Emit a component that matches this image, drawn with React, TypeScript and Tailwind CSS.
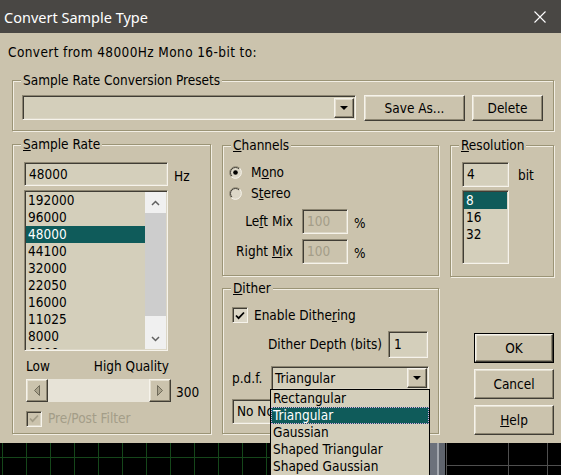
import React from "react";

const FONT = "font-['DejaVu_Sans_Condensed','DejaVu_Sans',sans-serif] [font-stretch:semi-condensed]";
const SUNKEN =
  "border border-t-[#8d8672] border-l-[#8d8672] border-b-[#f6f3eb] border-r-[#f6f3eb] shadow-[inset_1px_1px_0_#403d35,inset_-1px_-1px_0_#dcd7c7]";
const RAISED =
  "border border-t-[#f6f3eb] border-l-[#f6f3eb] border-b-[#403d35] border-r-[#403d35] shadow-[inset_-1px_-1px_0_#8d8672,inset_1px_1px_0_#e4dfd0]";

function Group({
  label,
  className,
  children,
}: {
  label: React.ReactNode;
  className: string;
  children?: React.ReactNode;
}) {
  return (
    <div
      className={`relative shrink-0 border border-[#9b9476] shadow-[1px_1px_0_#f2eee4,inset_1px_1px_0_#f2eee4] ${className}`}
    >
      <span className="absolute -top-[9px] left-[8px] px-[2px] bg-[#cbc3ad] leading-[17px] whitespace-nowrap">
        {label}
      </span>
      {children}
    </div>
  );
}

function Edit({
  className,
  children,
  disabled,
}: {
  className: string;
  children?: React.ReactNode;
  disabled?: boolean;
}) {
  return (
    <div
      className={`shrink-0 flex items-center pl-[4px] whitespace-nowrap overflow-hidden ${SUNKEN} ${
        disabled ? "bg-[#cbc3ad] text-[#a39d88]" : "bg-[#d4cfbb]"
      } ${className}`}
    >
      {children}
    </div>
  );
}

function Button({
  className,
  children,
  def,
}: {
  className: string;
  children: React.ReactNode;
  def?: boolean;
}) {
  if (def) {
    return (
      <div className={`shrink-0 border border-black ${className}`}>
        <div className={`w-full h-full flex items-center justify-center bg-[#cbc3ad] ${RAISED}`}>{children}</div>
      </div>
    );
  }
  return (
    <div className={`shrink-0 flex items-center justify-center bg-[#cbc3ad] ${RAISED} ${className}`}>{children}</div>
  );
}

function Combo({
  className,
  text,
  children,
}: {
  className: string;
  text: string;
  children?: React.ReactNode;
}) {
  return (
    <div className={`relative shrink-0 flex items-center bg-[#d4cfbb] ${SUNKEN} ${className}`}>
      <span className="flex-1 pl-[3px] whitespace-nowrap">{text}</span>
      <div className={`w-[20px] h-[20px] mr-[1px] flex items-center justify-center bg-[#cbc3ad] ${RAISED}`}>
        <svg width="8" height="4" viewBox="0 0 8 4">
          <path d="M0 0H8L4 4Z" fill="#000" />
        </svg>
      </div>
      {children}
    </div>
  );
}

function Check({ disabled }: { disabled?: boolean }) {
  return (
    <div
      className={`shrink-0 w-[16px] h-[16px] flex items-center justify-center ${SUNKEN} ${
        disabled ? "bg-[#cbc3ad]" : "bg-[#dcd7c7]"
      }`}
    >
      <svg width="10" height="9" viewBox="0 0 10 9">
        <path d="M1 4.5L3.6 7.2L9 1.5" fill="none" stroke={disabled ? "#a39d88" : "#000"} strokeWidth="1.8" />
      </svg>
    </div>
  );
}

function Radio({ checked }: { checked?: boolean }) {
  return (
    <svg width="13" height="13" viewBox="0 0 13 13" className="shrink-0">
      <circle cx="6.5" cy="6.5" r="6" fill="#dcd7c7" />
      <path d="M2.26 10.74A6 6 0 0 1 10.74 2.26" fill="none" stroke="#8d8672" />
      <path d="M10.74 2.26A6 6 0 0 1 2.26 10.74" fill="none" stroke="#f6f3eb" />
      <path d="M2.96 10.04A5 5 0 0 1 10.04 2.96" fill="none" stroke="#403d35" />
      {checked && <circle cx="6.5" cy="6.5" r="2.3" fill="#000" />}
    </svg>
  );
}

const RATES = ["192000", "96000", "48000", "44100", "32000", "22050", "16000", "11025", "8000", "6000"];
const PDF = ["Rectangular", "Triangular", "Gaussian", "Shaped Triangular", "Shaped Gaussian"];

function BottomStrip() {
  const greens = Array.from({ length: 12 }, (_, k) => 2.5 + 24 * k);
  return (
    <svg width="561" height="32" viewBox="0 0 561 32" className="block">
      <rect width="561" height="32" fill="#000" />
      {greens.map((x) => (
        <line key={x} x1={x} y1="0" x2={x} y2="32" stroke="#15461a" strokeWidth="1" />
      ))}
      <line x1="0" y1="14.5" x2="270" y2="14.5" stroke="#15461a" strokeWidth="1" />
      <rect x="430" y="0" width="7" height="32" fill="#6c717b" />
      <rect x="437" y="0" width="2" height="32" fill="#a3a7ae" />
      <rect x="439" y="0" width="6" height="32" fill="#5f646d" />
      <line x1="446.5" y1="0" x2="446.5" y2="32" stroke="#555" />
      <line x1="508.5" y1="0" x2="508.5" y2="32" stroke="#4f4f4f" />
      <line x1="547.5" y1="0" x2="547.5" y2="32" stroke="#4f4f4f" />
      <line x1="446" y1="22.5" x2="561" y2="22.5" stroke="#4f4f4f" />
    </svg>
  );
}

export default function App() {
  return (
    <div
      className={`relative w-[561px] h-[475px] overflow-hidden bg-black text-black text-[13.5px] leading-[17px] ${FONT}`}
    >
      {/* Title bar */}
      <div className="h-[33px] bg-[#494744] flex items-center pl-[4px] pr-[15px] text-white font-['Noto_Sans',sans-serif] [font-stretch:normal] text-[14.5px]">
        <span className="leading-[20px]">Convert Sample Type</span>
        <svg className="ml-auto mt-[1px]" width="12" height="12" viewBox="0 0 12 12">
          <path d="M0.5 0.5L11.5 11.5M11.5 0.5L0.5 11.5" stroke="#fff" strokeWidth="1.1" />
        </svg>
      </div>

      {/* Body */}
      <div className="h-[410px] bg-[#cbc3ad] pl-[12px] pt-[11px]">
        <div className="-ml-[4px] whitespace-nowrap tracking-[0.4px]">Convert from 48000Hz Mono 16-bit to:</div>

        <Group
          label="Sample Rate Conversion Presets"
          className="mt-[19px] h-[51px] w-[542px] flex items-start pl-[9px] pt-[14px]"
        >
          <Combo className="w-[334px] h-[25px]" text="" />
          <Button className="ml-[8px] w-[101px] h-[26px]">Save As...</Button>
          <Button className="ml-[7px] w-[71px] h-[26px]">Delete</Button>
        </Group>

        <div className="mt-[13px] flex items-start">
          {/* Sample Rate */}
          <Group
            label={
              <>
                <u>S</u>ample Rate
              </>
            }
            className="w-[199px] h-[290px] pl-[11px] pt-[17px]"
          >
            <div className="flex items-center">
              <Edit className="w-[144px] h-[24px]">48000</Edit>
              <span className="ml-[6px] mt-[4px]">Hz</span>
            </div>
            <div className={`mt-[4px] w-[144px] h-[161px] bg-[#d4cfbb] p-[1px] flex ${SUNKEN}`}>
              <div className="flex-1 overflow-hidden">
                {RATES.map((r) => (
                  <div
                    key={r}
                    className={r === "48000" ? "h-[17px] pl-[2px] bg-[#0f5b5a] text-white" : "h-[17px] pl-[2px]"}
                  >
                    {r}
                  </div>
                ))}
              </div>
              <div className="w-[21px] shrink-0 bg-[#f0f0f0] flex flex-col">
                <div className="h-[21px] flex items-center justify-center">
                  <svg width="9" height="6" viewBox="0 0 9 6">
                    <path d="M1 5L4.5 1.5L8 5" fill="none" stroke="#606060" strokeWidth="1.5" />
                  </svg>
                </div>
                <div className="h-[103px] bg-[#cdcdcd]" />
                <div className="flex-1" />
                <div className="h-[21px] flex items-center justify-center">
                  <svg width="9" height="6" viewBox="0 0 9 6">
                    <path d="M1 1L4.5 4.5L8 1" fill="none" stroke="#606060" strokeWidth="1.5" />
                  </svg>
                </div>
              </div>
            </div>
            <div className="mt-[7px] w-[145px] pl-[2px] flex justify-between whitespace-nowrap">
              <span>Low</span>
              <span>High Quality</span>
            </div>
            <div className="mt-[4px] ml-[2px] flex items-center">
              <div className="w-[145px] h-[23px] shrink-0 flex">
                <div className={`w-[22px] h-full flex items-center justify-center bg-[#cbc3ad] ${RAISED}`}>
                  <svg width="6" height="11" viewBox="0 0 6 11">
                    <path d="M5.5 0.5V10.5L0.5 5.5Z" fill="#aaa38d" stroke="#6f6a59" />
                  </svg>
                </div>
                <div className="flex-1 bg-[#e7e3d7]" />
                <div className={`w-[22px] h-full flex items-center justify-center bg-[#cbc3ad] ${RAISED}`}>
                  <svg width="6" height="11" viewBox="0 0 6 11">
                    <path d="M0.5 0.5V10.5L5.5 5.5Z" fill="#aaa38d" stroke="#6f6a59" />
                  </svg>
                </div>
              </div>
              <span className="ml-[5px] mt-[4px]">300</span>
            </div>
            <div className="mt-[8px] ml-[2px] flex items-center">
              <Check disabled />
              <span className="ml-[6px] text-[#a39d88] whitespace-nowrap">Pre/Post Filter</span>
            </div>
          </Group>

          {/* Middle column */}
          <div className="ml-[11px] shrink-0 pt-[1px] flex flex-col">
            <Group
              label={
                <>
                  <u>C</u>hannels
                </>
              }
              className="w-[217px] h-[131px] pl-[6px] pt-[18px]"
            >
              <div className="h-[17px] flex items-center">
                <Radio checked />
                <span className="ml-[9px]">
                  M<u>o</u>no
                </span>
              </div>
              <div className="mt-[4px] h-[17px] flex items-center">
                <Radio />
                <span className="ml-[9px]">
                  S<u>t</u>ereo
                </span>
              </div>
              <div className="mt-[7px] h-[25px] flex items-center">
                <span className="w-[64px] shrink-0 text-right whitespace-nowrap">
                  Le<u>f</u>t Mix
                </span>
                <Edit disabled className="ml-[9px] w-[46px] h-[25px]">
                  100
                </Edit>
                <span className="ml-[6px] mt-[3px]">%</span>
              </div>
              <div className="mt-[5px] h-[25px] flex items-center">
                <span className="w-[64px] shrink-0 text-right whitespace-nowrap">
                  Right <u>M</u>ix
                </span>
                <Edit disabled className="ml-[9px] w-[46px] h-[25px]">
                  100
                </Edit>
                <span className="ml-[6px] mt-[4px]">%</span>
              </div>
            </Group>

            <Group
              label={
                <>
                  <u>D</u>ither
                </>
              }
              className="mt-[12px] w-[217px] h-[146px] pl-[9px] pt-[18px]"
            >
              <div className="h-[16px] flex items-center">
                <Check />
                <span className="ml-[6px] whitespace-nowrap">
                  Enable Dithe<u>r</u>ing
                </span>
              </div>
              <div className="mt-[8px] w-[196px] h-[27px] flex items-center justify-end">
                <span className="mr-[6px] whitespace-nowrap">Dither Depth (bits)</span>
                <Edit className="w-[40px] h-[27px] pl-[5px]">1</Edit>
              </div>
              <div className="mt-[8px] h-[24px] flex items-center">
                <span className="w-[39px] shrink-0">p.d.f.</span>
                <Combo className="w-[158px] h-[24px]" text="Triangular">
                  <div className="absolute -left-[2px] top-[22px] w-[160px] z-10 border border-black bg-[#d4cfbb]">
                    {PDF.map((p) => (
                      <div
                        key={p}
                        className={
                          p === "Triangular"
                            ? "h-[17px] pl-[2px] bg-[#0f5b5a] text-white outline-1 outline-dotted -outline-offset-1 outline-[#d9a7df] whitespace-nowrap"
                            : "h-[17px] pl-[2px] whitespace-nowrap"
                        }
                      >
                        {p}
                      </div>
                    ))}
                  </div>
                </Combo>
              </div>
              <Edit className="mt-[9px] w-[196px] h-[25px]">No Noise Shaping</Edit>
            </Group>
          </div>

          {/* Right column */}
          <div className="ml-[11px] shrink-0 pt-[1px] flex flex-col">
            <Group
              label={
                <>
                  <u>R</u>esolution
                </>
              }
              className="w-[104px] h-[132px] pl-[11px] pt-[16px]"
            >
              <div className="flex items-center">
                <Edit className="w-[47px] h-[25px]">4</Edit>
                <span className="ml-[9px] mt-[2px]">bit</span>
              </div>
              <div className={`mt-[3px] w-[47px] h-[74px] bg-[#d4cfbb] p-[1px] ${SUNKEN}`}>
                <div className="h-[17px] pl-[2px] bg-[#0f5b5a] text-white">8</div>
                <div className="h-[17px] pl-[2px]">16</div>
                <div className="h-[17px] pl-[2px]">32</div>
              </div>
            </Group>
            <div className="mt-[56px] ml-[24px] flex flex-col">
              <Button def className="w-[80px] h-[30px]">
                OK
              </Button>
              <Button className="mt-[6px] w-[80px] h-[30px]">Cancel</Button>
              <Button className="mt-[6px] w-[80px] h-[30px]">
                <span>
                  <u>H</u>elp
                </span>
              </Button>
            </div>
          </div>
        </div>
      </div>

      <BottomStrip />
    </div>
  );
}
